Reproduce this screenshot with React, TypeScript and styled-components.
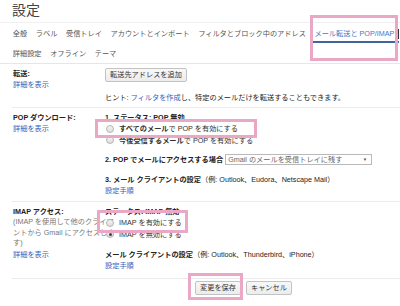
import * as React from "react";
import styled, { createGlobalStyle } from "styled-components";

const GlobalStyle = createGlobalStyle`
  body {
    margin: 0;
    background: #fff;
    font-family: "Liberation Sans", "Noto Sans CJK JP", sans-serif;
    font-size: 7.2px;
    color: #222;
  }
`;

const Page = styled.div`
  position: relative;
  width: 400px;
  height: 306px;
  overflow: hidden;
  background: #fff;
`;

const Title = styled.h1`
  margin: 0;
  padding-left: 12px;
  height: 22px;
  line-height: 20px;
  font-size: 14px;
  font-weight: normal;
  color: #444;
  border-bottom: 1px solid #f0f0f0;
`;

const Tabs = styled.nav`
  padding-left: 8.5px;
  border-bottom: 1px solid #e6e6e6;
`;

const TabRow = styled.div`
  position: relative;
  display: flex;
  height: 20px;
  white-space: nowrap;
`;

const Tab = styled.span<{ $active?: boolean }>`
  position: relative;
  display: flex;
  align-items: center;
  padding: 0 4.3px;
  color: ${(p) => (p.$active ? "#4a74c4" : "#555")};

  &::after {
    content: "";
    position: absolute;
    left: 0;
    right: 0;
    bottom: 0;
    height: 2px;
    background: ${(p) => (p.$active ? "#41659f" : "transparent")};
  }
`;

const EdgeMark = styled.span`
  position: absolute;
  right: 1px;
  top: 6px;
  width: 2px;
  height: 10px;
  background: #333;
`;

const Section = styled.section<{ $pad?: number }>`
  display: flex;
  margin-left: 12px;
  padding: 4px 0 ${(p) => p.$pad ?? 4}px;
  border-bottom: 1px solid #ececec;
  line-height: 11px;
`;

const LabelCol = styled.div`
  width: 92px;
  flex: none;
  padding-left: 1px;
  white-space: nowrap;
`;

const Label = styled.div`
  font-weight: bold;
  color: #222;
`;

const Note = styled.div`
  color: #777;
  line-height: 10.5px;
`;

const Link = styled.a`
  color: #2f62c0;
  text-decoration: none;
  cursor: pointer;
`;

const Content = styled.div`
  flex: 1;
  min-width: 0;
`;

const Line = styled.div<{ $gap?: number; $bold?: boolean }>`
  display: flex;
  align-items: center;
  margin-top: ${(p) => p.$gap ?? 0}px;
  font-weight: ${(p) => (p.$bold ? "bold" : "normal")};
  white-space: nowrap;
`;

const RadioRow = styled.label`
  display: flex;
  align-items: center;
  height: 11.5px;
  white-space: nowrap;
  color: #333;
`;

const Radio = styled.span<{ $checked?: boolean }>`
  position: relative;
  width: 6px;
  height: 6px;
  margin: 0 5px 0 1px;
  border: 1px solid #b4b4b4;
  border-radius: 50%;
  background: linear-gradient(#f4f4f4, #dedede);

  &::after {
    content: "";
    display: ${(p) => (p.$checked ? "block" : "none")};
    position: absolute;
    left: 1.5px;
    top: 1.5px;
    width: 3px;
    height: 3px;
    border-radius: 50%;
    background: #444;
  }
`;

const Button = styled.button`
  height: 14px;
  padding: 0 4px;
  font: inherit;
  color: #333;
  line-height: 12px;
  background: linear-gradient(#f8f8f8, #ececec);
  border: 1px solid #c3c3c3;
  border-radius: 2px;
  cursor: pointer;
`;

const SelectBox = styled.div`
  display: flex;
  align-items: center;
  justify-content: space-between;
  width: 147px;
  height: 11px;
  margin-left: 2px;
  padding: 0 4px 0 2px;
  border: 1px solid #b9b9b9;
  box-sizing: border-box;
  color: #666;
  font-weight: normal;
  white-space: nowrap;
  overflow: hidden;
`;

const Arrow = styled.span`
  font-size: 4.5px;
  color: #555;
`;

const Footer = styled.div`
  display: flex;
  gap: 5px;
  padding: 2px 0 0 195px;
`;

const Highlight = styled.div<{ $x: number; $y: number; $w: number; $h: number }>`
  position: absolute;
  left: ${(p) => p.$x}px;
  top: ${(p) => p.$y}px;
  width: ${(p) => p.$w}px;
  height: ${(p) => p.$h}px;
  border: 3px solid #eaa8c6;
  box-sizing: border-box;
  pointer-events: none;
`;

const App: React.FunctionComponent = () => {
  return (
    <Page>
      <GlobalStyle />
      <Title>設定</Title>

      <Tabs>
        <TabRow>
          <Tab>全般</Tab>
          <Tab>ラベル</Tab>
          <Tab>受信トレイ</Tab>
          <Tab>アカウントとインポート</Tab>
          <Tab>フィルタとブロック中のアドレス</Tab>
          <Tab $active>メール転送と POP/IMAP</Tab>
          <EdgeMark />
        </TabRow>
        <TabRow>
          <Tab>詳細設定</Tab>
          <Tab>オフライン</Tab>
          <Tab>テーマ</Tab>
        </TabRow>
      </Tabs>

      <Section $pad={4}>
        <LabelCol>
          <Label>転送:</Label>
          <Link>詳細を表示</Link>
        </LabelCol>
        <Content>
          <Button>転送先アドレスを追加</Button>
          <Line $gap={10}>
            ヒント:&nbsp;<Link>フィルタを作成</Link>し、特定のメールだけを転送することもできます。
          </Line>
        </Content>
      </Section>

      <Section $pad={5}>
        <LabelCol>
          <Label>POP ダウンロード:</Label>
          <Link>詳細を表示</Link>
        </LabelCol>
        <Content>
          <Line $bold>1. ステータス: POP 無効</Line>
          <RadioRow>
            <Radio />
            <b>すべてのメール</b>で POP を有効にする
          </RadioRow>
          <RadioRow>
            <Radio />
            <b>今後受信するメール</b>で POP を有効にする
          </RadioRow>
          <Line $gap={8} $bold>
            2. POP でメールにアクセスする場合
            <SelectBox>
              Gmail のメールを受信トレイに残す
              <Arrow>▼</Arrow>
            </SelectBox>
          </Line>
          <Line $gap={9}>
            <b>3. メール クライアントの設定</b>（例: Outlook、Eudora、Netscape Mail）
          </Line>
          <Link>設定手順</Link>
        </Content>
      </Section>

      <Section $pad={7}>
        <LabelCol>
          <Label>IMAP アクセス:</Label>
          <Note>
            (IMAP を使用して他のクライア
            <br />
            ントから Gmail にアクセスしま
            <br />
            す)
          </Note>
          <Link>詳細を表示</Link>
        </LabelCol>
        <Content>
          <Line $bold>ステータス: IMAP 無効</Line>
          <RadioRow>
            <Radio />
            IMAP を有効にする
          </RadioRow>
          <RadioRow>
            <Radio $checked />
            IMAP を無効にする
          </RadioRow>
          <Line $gap={9}>
            <b>メール クライアントの設定</b>（例: Outlook、Thunderbird、iPhone）
          </Line>
          <Link>設定手順</Link>
        </Content>
      </Section>

      <Footer>
        <Button>変更を保存</Button>
        <Button>キャンセル</Button>
      </Footer>

      <Highlight $x={310} $y={15} $w={88} $h={46} />
      <Highlight $x={95} $y={119} $w={162} $h={19} />
      <Highlight $x={97} $y={210} $w={91} $h={23} />
      <Highlight $x={188} $y={273} $w={55} $h={27} />
    </Page>
  );
};

export default App;
